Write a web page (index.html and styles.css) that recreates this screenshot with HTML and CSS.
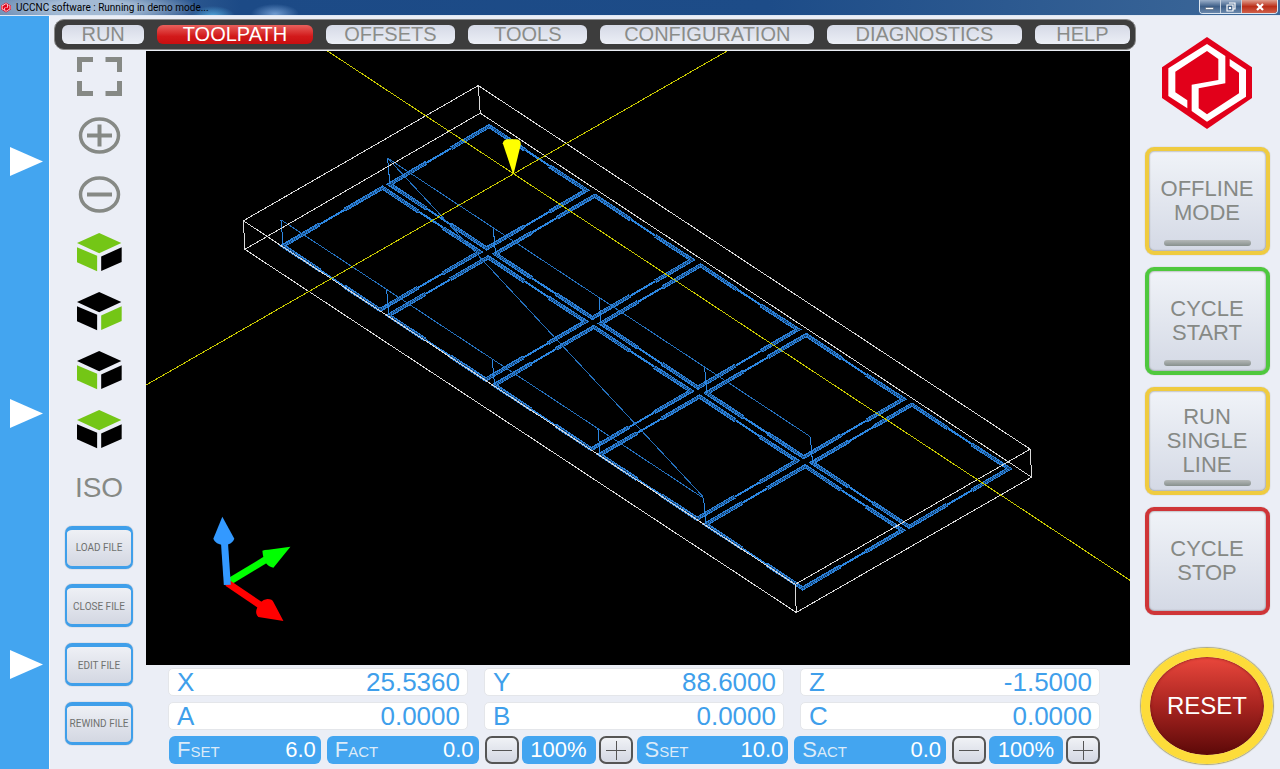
FILE: index.html
```html
<!DOCTYPE html>
<html lang="en">
<head>
<meta charset="utf-8">
<title>UCCNC software</title>
<link rel="stylesheet" href="styles.css">
</head>
<body>
<svg class="defs" aria-hidden="true">
  <symbol id="logo" viewBox="94 109 270 276">
    <path fill="#e2001a" d="M229 109 364 200V292L229 385 94 292V200Z"/>
    <path fill="#fff" d="M170 323 113 286V203L229 130 284 166V248L204 263V323L229 341 325 278V216L297 196V175L346 207V288L229 363 183 331V252L263 238V175L229 151 134 213V275L170 299Z"/>
  </symbol>
  <symbol id="cube-top" viewBox="0 0 134 116"><path d="M66 0 132 30 66 60 0 30Z"/></symbol>
  <symbol id="cube-left" viewBox="0 0 134 116"><path d="M0 42 60 68V114L0 87Z"/></symbol>
  <symbol id="cube-right" viewBox="0 0 134 116"><path d="M72 70 133 42V86L72 113Z"/></symbol>
</svg>

<header class="titlebar">
  <svg class="titlebar-icon" aria-hidden="true"><use href="#logo"/></svg>
  <h1 class="titlebar-text">UCCNC software : Running in demo mode...</h1>
  <div class="window-controls">
    <button class="win-btn" aria-label="Minimize"><svg viewBox="0 0 12 10"><path d="M1.500 5.500h8v2h-8z" fill="#fff" stroke="#456" stroke-width=".5"/></svg></button>
    <button class="win-btn" aria-label="Restore"><svg viewBox="0 0 12 10"><path d="M4 1h6v6H8M2 3h6v6H2zM4.500 5.500h1v1h-1z" fill="none" stroke="#fff" stroke-width="1.200"/></svg></button>
    <button class="win-btn win-close" aria-label="Close"><svg viewBox="0 0 12 10"><path d="M3 2l6 6M9 2l-6 6" stroke="#fff" stroke-width="2.200"/></svg></button>
  </div>
</header>

<div class="app">
  <div class="drawer">
    <button class="drawer-btn" aria-label="Open upper panel"><svg viewBox="0 0 33 29"><path d="M0 0 33 14.500 0 29Z" fill="#fff"/></svg></button>
    <button class="drawer-btn" aria-label="Open middle panel"><svg viewBox="0 0 33 29"><path d="M0 0 33 14.500 0 29Z" fill="#fff"/></svg></button>
    <button class="drawer-btn" aria-label="Open lower panel"><svg viewBox="0 0 33 29"><path d="M0 0 33 14.500 0 29Z" fill="#fff"/></svg></button>
  </div>

  <main class="main">
    <nav class="tabs">
      <button class="tab">RUN</button>
      <button class="tab tab-active">TOOLPATH</button>
      <button class="tab">OFFSETS</button>
      <button class="tab">TOOLS</button>
      <button class="tab">CONFIGURATION</button>
      <button class="tab">DIAGNOSTICS</button>
      <button class="tab">HELP</button>
    </nav>

    <div class="work">
      <div class="tools">
        <button class="tool" aria-label="Fit view"><svg viewBox="0 0 45 39"><path d="M16 2.500H2.500V15M28.500 2.500H42.500V15M16 36.500H2.500V24M28.500 36.500H42.500V24" fill="none" stroke="#868985" stroke-width="5"/></svg></button>
        <button class="tool" aria-label="Zoom in"><svg viewBox="0 0 45 39"><ellipse cx="22.500" cy="19.500" rx="19" ry="16.500" fill="none" stroke="#868985" stroke-width="3.500"/><path d="M10 19.500h25M22.500 8.500v22" stroke="#868985" stroke-width="4"/></svg></button>
        <button class="tool" aria-label="Zoom out"><svg viewBox="0 0 45 39"><ellipse cx="22.500" cy="19.500" rx="19" ry="16.500" fill="none" stroke="#868985" stroke-width="3.500"/><path d="M10 19.500h25" stroke="#868985" stroke-width="4"/></svg></button>
        <button class="tool" aria-label="Isometric view"><svg><use class="lit" href="#cube-top"/><use class="lit" href="#cube-left"/><use href="#cube-right"/></svg></button>
        <button class="tool" aria-label="Right view"><svg><use href="#cube-top"/><use href="#cube-left"/><use class="lit" href="#cube-right"/></svg></button>
        <button class="tool" aria-label="Front view"><svg><use href="#cube-top"/><use class="lit" href="#cube-left"/><use href="#cube-right"/></svg></button>
        <button class="tool" aria-label="Top view"><svg><use class="lit" href="#cube-top"/><use href="#cube-left"/><use href="#cube-right"/></svg></button>
        <button class="tool tool-iso">ISO</button>
        <button class="file-btn">LOAD FILE</button>
        <button class="file-btn">CLOSE FILE</button>
        <button class="file-btn">EDIT FILE</button>
        <button class="file-btn">REWIND FILE</button>
      </div>

      <div class="stage">
        <svg class="viewport" viewBox="146 51 984 613" preserveAspectRatio="xMidYMid slice" role="img" aria-label="Toolpath preview">
          <defs>
            <path id="outline" d="M0 0 97 64 -2.600 122 -99.500 58Z"/>
            <path id="passes" d="M-38 22 0 0 36 24M60 40 97 64 60 85.500M35 100 -2.600 122 -38.500 98.300M-62.700 82.300 -99.500 58 -62.700 36.500"/>
            <g id="tile">
              <use href="#outline" stroke="#2c86e0" stroke-width="2"/>
              <use href="#passes" stroke="#2b80d8" stroke-width="4"/>
              <use href="#passes" stroke="#123f6e" stroke-width="2" stroke-dasharray="1 1"/>
              <path d="M-99.500 58V55L-101.500 32" stroke="#2c86e0"/>
            </g>
            <g id="row">
              <use href="#tile"/>
              <use href="#tile" x="105.500" y="69.500"/>
              <use href="#tile" x="211" y="139"/>
              <use href="#tile" x="316.500" y="208.500"/>
              <use href="#tile" x="422" y="278"/>
              <path d="M-101.500 32 320.500 310" stroke="#2470bd"/>
            </g>
          </defs>
          <g fill="none" stroke-width="1" shape-rendering="crispEdges">
            <use href="#row" x="489.500" y="126"/>
            <use href="#row" x="383" y="187.500"/>
            <path d="M388 158 703 496" stroke="#2470bd"/>
            <path stroke="#d8d8d8" d="M478.500 85.500 244 220.500 795 583.500 1029.500 448.500ZM480.500 113 245.500 249 796 611.500 1031 476.500ZM478.500 85.500 480.500 113M244 220.500 245.500 249M795 583.500 796 611.500M1029.500 448.500 1031 476.500"/>
            <path stroke="#c8c800" d="M328 51 1130 580M146 385 727 51"/>
          </g>
          <path fill="#ff0" d="M503 143Q504 139 508 139H516Q521 139 521 144L514 173H513Z"/>
          <g stroke-width="7">
            <path d="M228 582 266 559" stroke="#0f0"/>
            <path d="M228 582 262 605" stroke="#f00"/>
            <path d="M228 584 225 540" stroke="#39f"/>
          </g>
          <path fill="#0f0" d="M291 546 274 567Q264 565 263 550Q265 549 269 549Z"/>
          <path fill="#f00" d="M284 620 259 616Q256 613 257 609 260 599 268 598 273 598 274 601Z"/>
          <path fill="#39f" d="M223 516 235 538Q233 544 225 544 216 544 214 538Z"/>
        </svg>

        <div class="readouts">
          <div class="axes">
            <label class="axis">X<input value="25.5360" readonly></label>
            <label class="axis">Y<input value="88.6000" readonly></label>
            <label class="axis">Z<input value="-1.5000" readonly></label>
            <label class="axis">A<input value="0.0000" readonly></label>
            <label class="axis">B<input value="0.0000" readonly></label>
            <label class="axis">C<input value="0.0000" readonly></label>
          </div>
          <div class="rates">
            <div class="rate-group">
              <label class="rate"><span class="rate-name">F<small>SET</small></span><input value="6.0"></label>
              <label class="rate"><span class="rate-name">F<small>ACT</small></span><input value="0.0" readonly></label>
              <div class="override">
                <button class="step" aria-label="Feed down"><svg viewBox="0 0 20 20"><path d="M0 10.500h20"/></svg></button>
                <output class="percent">100%</output>
                <button class="step" aria-label="Feed up"><svg viewBox="0 0 20 20"><path d="M0 10.500h20M10.500 1v19"/></svg></button>
              </div>
            </div>
            <div class="rate-group">
              <label class="rate"><span class="rate-name">S<small>SET</small></span><input value="10.0"></label>
              <label class="rate"><span class="rate-name">S<small>ACT</small></span><input value="0.0" readonly></label>
              <div class="override">
                <button class="step" aria-label="Spindle down"><svg viewBox="0 0 20 20"><path d="M0 10.500h20"/></svg></button>
                <output class="percent">100%</output>
                <button class="step" aria-label="Spindle up"><svg viewBox="0 0 20 20"><path d="M0 10.500h20M10.500 1v19"/></svg></button>
              </div>
            </div>
          </div>
        </div>
      </div>
    </div>
  </main>

  <aside class="side">
    <svg class="brand" role="img" aria-label="UCCNC logo"><use href="#logo"/></svg>
    <div class="cycle">
      <button class="cycle-btn yellow lamp">OFFLINE<br>MODE</button>
      <button class="cycle-btn green lamp">CYCLE<br>START</button>
      <button class="cycle-btn yellow lamp">RUN<br>SINGLE<br>LINE</button>
      <button class="cycle-btn red">CYCLE<br>STOP</button>
    </div>
    <button class="reset">RESET</button>
  </aside>
</div>
</body>
</html>
```

FILE: styles.css
```css
* { box-sizing: border-box; }

body {
  margin: 0;
  min-height: 100vh;
  display: flex;
  flex-direction: column;
  background: #ebeef6;
  font-family: "Liberation Sans", Arial, sans-serif;
}

button {
  margin: 0;
  padding: 0;
  border: 0;
  background: none;
  color: inherit;
  font: inherit;
}

svg { display: block; }

.defs { position: absolute; width: 0; height: 0; }

/* title bar */
.titlebar {
  display: flex;
  align-items: center;
  height: 16px;
  border-bottom: 1px solid #dfe8f4;
  background:
    radial-gradient(ellipse 110px 20px at 90px 8px, #a3bad4 40%, transparent),
    radial-gradient(ellipse 22px 10px at 213px 16px, #4fa3d8, transparent),
    radial-gradient(ellipse 24px 10px at 275px 14px, #6f9bd0, transparent),
    linear-gradient(90deg, #6486b0, #1c4a86 240px, #1d4c88 60%, #3d6899);
}
.titlebar-icon { width: 10px; height: 11px; margin: 0 5px 0 1px; }
.titlebar-text {
  flex: 1;
  margin: 0;
  color: #000;
  font: 10px/15px Roboto, sans-serif;
}
.window-controls {
  display: flex;
  align-self: flex-start;
  height: 14px;
  margin-right: 2px;
  border: 1px solid #dce6f0;
  border-top: 0;
  border-radius: 0 0 4px 4px;
  overflow: hidden;
}
.win-btn {
  display: grid;
  place-items: center;
  width: 21px;
  border-right: 1px solid #c3d0df;
  background: linear-gradient(#9bb0ca, #3e5f88 50%, #6a88ac);
}
.win-btn svg { width: 12px; height: 10px; }
.win-close { width: 35px; border: 0; background: linear-gradient(#e0a090, #bb2e18 50%, #d0604a); }

/* frame */
.app { flex: 1; display: flex; }

.drawer {
  display: flex;
  flex-direction: column;
  justify-content: space-between;
  width: 50px;
  padding: 131px 7px 90px 10px;
  border-right: 1px solid #f8fafc;
  background: #43a5f0;
}
.drawer-btn svg { width: 33px; height: 29px; }

.main { flex: 1; min-width: 0; display: flex; flex-direction: column; }

.tabs {
  display: grid;
  grid-template-columns: 82fr 155fr 129fr 119fr 213fr 194fr 95fr;
  gap: 13px;
  margin: 3px 0 1px 4px;
  padding: 5px 5px 5px 7px;
  border: 1px solid #8a8a8a;
  border-radius: 10px;
  background: #3d3d3d;
}
.tab {
  min-width: 0;
  height: 19px;
  border-radius: 6px;
  background: linear-gradient(#d5d9e6, #eceff6);
  color: #8a8c89;
  font-size: 20px;
  line-height: 19px;
}
.tab-active { background: linear-gradient(#e8605c, #d2191a 60%, #c80f10); color: #fff; }

.work { flex: 1; display: flex; }

/* tool column */
.tools {
  display: flex;
  flex-direction: column;
  align-items: center;
  justify-content: space-between;
  width: 96px;
  padding: 4px 0 24px 2px;
}
.tool {
  display: grid;
  place-items: center;
  height: 43px;
}
.tool svg { width: 45px; height: 39px; }
.tool use { fill: #000; }
.tool .lit { fill: #74c616; }
.tool-iso { color: #868985; font-size: 28px; }
.file-btn {
  width: 68px;
  height: 43px;
  border: 2px solid #3f9fea;
  border-top-width: 4px;
  border-bottom-width: 3px;
  border-radius: 7px;
  background: linear-gradient(#eef0f5, #d3d7e2);
  box-shadow: 0 0 1px #6b7f92;
  color: #6f716f;
  font-family: "Liberation Sans Narrow", Roboto, sans-serif;
  font-size: 10px;
  white-space: nowrap;
}

/* stage */
.stage {
  flex: 1;
  min-width: 0;
  display: flex;
  flex-direction: column;
  margin-right: 6px;
}
.viewport {
  flex: 1 1 0;
  width: 100%;
  min-height: 300px;
  background: #000;
}

.readouts {
  display: grid;
  gap: 6px;
  padding: 3px 30px 5px 22px;
}
.axes { display: grid; grid-template-columns: repeat(3, 1fr); gap: 6px 16px; }
.axis, .rate { display: flex; align-items: center; height: 28px; min-width: 0; }
.axis input, .rate input {
  flex: 1;
  min-width: 0;
  width: 0;
  padding: 0;
  border: 0;
  background: none;
  color: inherit;
  font: inherit;
  text-align: right;
}
.axis {
  padding: 0 7px 0 8px;
  border: 1px solid #e4e6ea;
  border-radius: 5px;
  background: #fff;
  color: #3f9feb;
  font-size: 26px;
}

.rates { display: flex; gap: 4px; padding-left: 1px; }
.rate-group { flex: 1; min-width: 0; display: flex; gap: 6px; }
.rate {
  flex: 1;
  padding: 0 5px 0 8px;
  border-radius: 6px;
  background: #43a5f0;
  color: #fff;
  font-size: 22px;
}
.rate-name { color: #dcebf8; }
.rate-name small { font-size: 15px; }
.override { display: flex; gap: 3px; }
.step {
  display: grid;
  place-items: center;
  width: 34px;
  height: 28px;
  border: 2px solid #555;
  border-radius: 7px;
  background: linear-gradient(#f0f2f6, #d3d7e2);
}
.step svg { width: 20px; height: 20px; stroke: #555; stroke-width: 1; }
.percent {
  width: 74px;
  border-radius: 6px;
  background: #43a5f0;
  color: #fff;
  font-size: 22px;
  line-height: 28px;
  text-align: center;
}

/* right column */
.side {
  display: flex;
  flex-direction: column;
  align-items: center;
  width: 144px;
  padding: 21px 7px 5px 5px;
}
.brand { width: 90px; height: 92px; margin: 0 0 18px; }
.cycle { display: grid; gap: 12px; width: 125px; }
.cycle-btn {
  position: relative;
  height: 108px;
  border: 4px solid;
  border-radius: 9px;
  background: linear-gradient(#f0f3f8, #d4d9e5) padding-box;
  box-shadow: inset 0 0 2px #666, 0 0 1px #999;
  color: #868985;
  font-size: 22px;
  line-height: 24px;
}
.yellow { border-color: #efcb40; }
.green { border-color: #4fc83e; }
.red { border-color: #cf3538; }
.lamp::after {
  content: "";
  position: absolute;
  right: 15px;
  bottom: 5px;
  left: 15px;
  height: 6px;
  border-radius: 3px;
  background: linear-gradient(#b4b8b8, #87908d);
}
.reset {
  width: 100%;
  height: 116px;
  margin-top: auto;
  border: 9px solid #fddc3a;
  border-radius: 50%;
  background: linear-gradient(#ea473c, #a82420 50%, #5c0908) padding-box;
  box-shadow: 0 0 1px 1px #aaa67a, inset 0 0 3px #611;
  color: #fff;
  font-size: 24px;
}
```
